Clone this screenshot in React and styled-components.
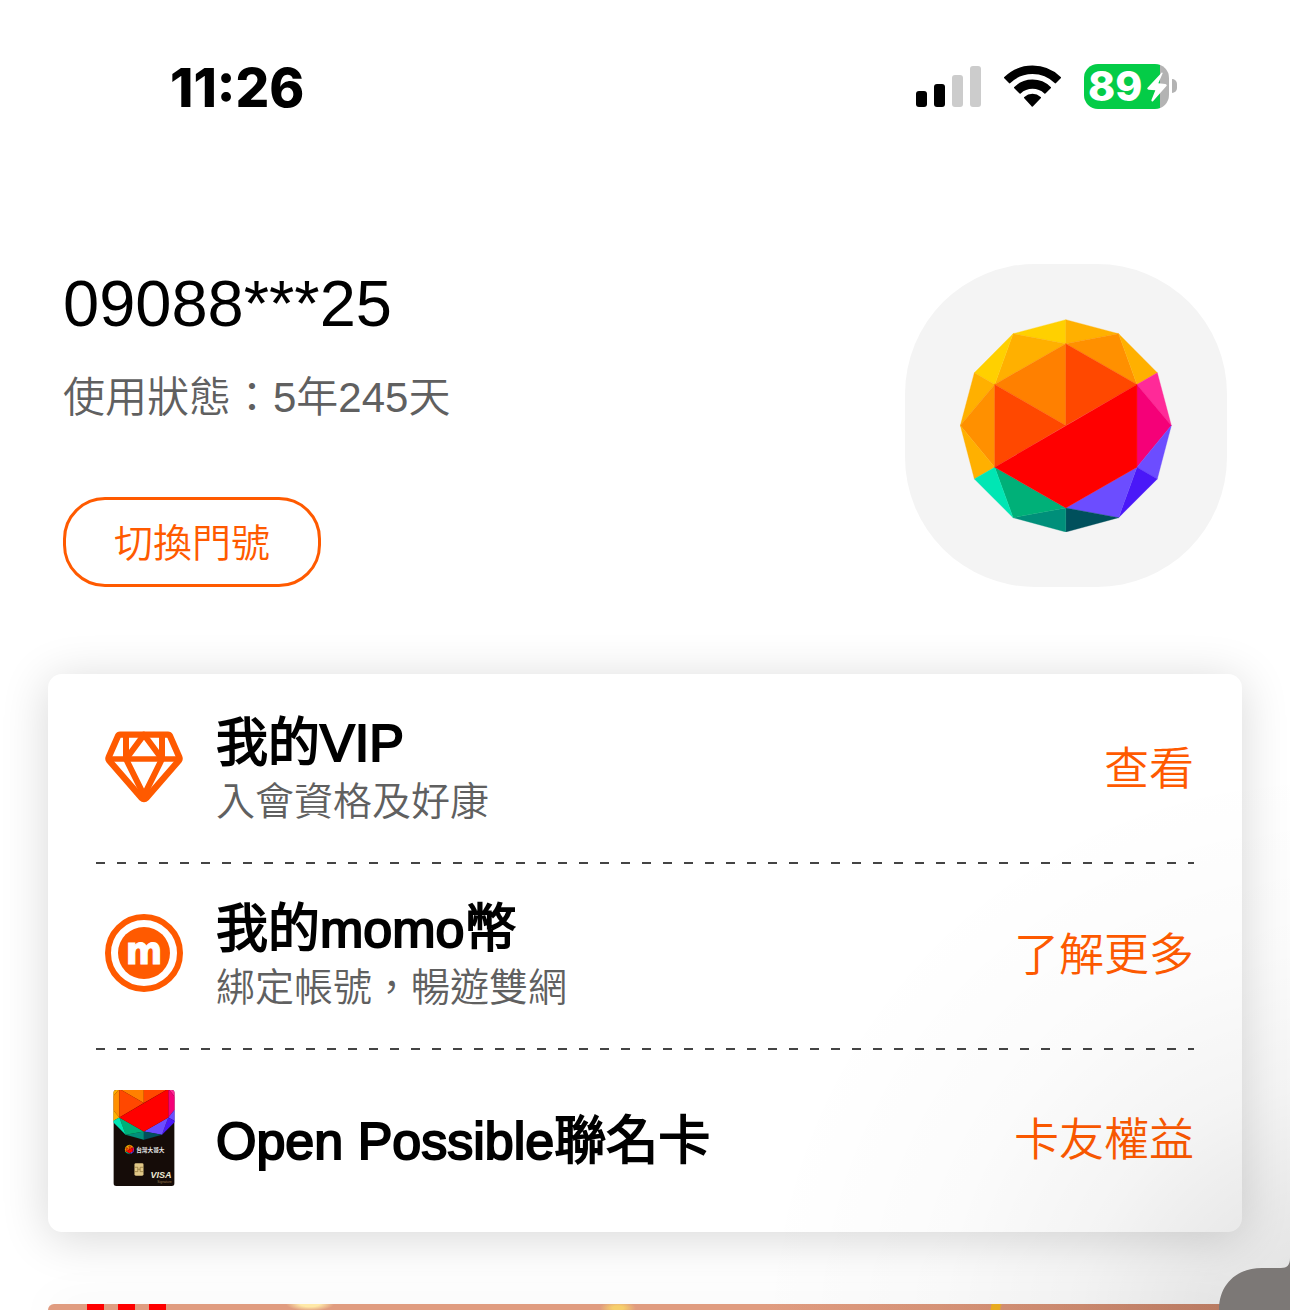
import React from 'react';
import styled, { createGlobalStyle } from 'styled-components';

const GlobalStyle = createGlobalStyle`
  * {
    box-sizing: border-box;
  }

  body {
    margin: 0;
    background: #fff;
    color: #000;
    font-family: 'Liberation Sans', 'Noto Sans CJK TC', sans-serif;
  }
`;

const Screen = styled.div`
  position: relative;
  min-height: 100vh;
  overflow: hidden;

  display: flex;
  flex-direction: column;
`;

const StatusBar = styled.div`
  height: 176px;
  padding: 0 113px 0 170px;

  display: flex;
  align-items: center;
  justify-content: space-between;
`;

const Time = styled.time`
  font-family: Inter, sans-serif;
  font-size: 53px;
  font-weight: 800;
  font-variation-settings: 'opsz' 14;
  line-height: 64px;
`;

const StatusIcons = styled.div`
  padding-bottom: 4px;

  display: flex;
  align-items: center;
  gap: 23px;

  svg {
    display: block;
  }
`;

const Battery = styled.div`
  display: flex;
  align-items: center;
  gap: 3px;
`;

const BatteryBody = styled.div`
  position: relative;
  width: 85px;
  height: 45px;
  padding-left: 4px;
  border-radius: 14px;
  background: linear-gradient(
    to right,
    #04cc47 ${({ $level }) => $level}%,
    #b3b3b3 ${({ $level }) => $level}%
  );

  color: #fff;
  font-family: Inter, sans-serif;
  font-size: 41px;
  font-weight: 800;
  font-variation-settings: 'opsz' 14;
  line-height: 45px;

  svg {
    position: absolute;
    top: 8px;
    right: 2px;
  }
`;

const BatteryTip = styled.div`
  width: 5px;
  height: 14px;
  border-radius: 0 6px 6px 0;
  background: #b3b3b3;
`;

const Profile = styled.header`
  padding: 88px 63px 87px;

  display: flex;
  justify-content: space-between;
`;

const ProfileInfo = styled.div`
  display: flex;
  flex-direction: column;
  align-items: flex-start;
  justify-content: space-between;
`;

const PhoneNumber = styled.h1`
  margin: 0 0 24px;
  font-size: 65px;
  font-weight: 400;
  line-height: 80px;
`;

const UsageStatus = styled.p`
  margin: 0;
  color: #606060;
  font-size: 42px;
  font-weight: 350;
  line-height: 60px;
`;

const SwitchButton = styled.button`
  height: 90px;
  padding: 0 48px 4px;
  border: 3px solid #ff5a00;
  border-radius: 42px;
  background: #fff;

  color: #ff5a00;
  font-family: inherit;
  font-size: 39px;
  font-weight: 350;
  cursor: pointer;
`;

const Avatar = styled.div`
  width: 322px;
  height: 323px;
  flex-shrink: 0;
  border-radius: 130px;
  background: #f4f4f4;

  display: flex;
  align-items: center;
  justify-content: center;
`;

const Card = styled.ul`
  margin: 0 48px 72px;
  padding: 4px 48px 0;
  border-radius: 14px;
  background: #fff;
  box-shadow: 0 6px 48px rgba(0, 0, 0, 0.16);
  list-style: none;
`;

const Row = styled.li`
  min-height: 184px;

  display: flex;
  align-items: center;
  gap: 24px;

  &:last-child {
    min-height: 182px;
  }
`;

const Divider = styled.li`
  height: 2px;
  background: repeating-linear-gradient(
    to right,
    #444 0 9px,
    transparent 9px 21px
  );
`;

const IconBox = styled.div`
  width: 96px;
  padding-bottom: 6px;
  flex-shrink: 0;

  display: flex;
  justify-content: center;
`;

const RowText = styled.div`
  flex: 1;
`;

const Title = styled.h2`
  margin: 0;
  font-size: 52px;
  font-weight: 350;
  line-height: 64px;
  -webkit-text-stroke: 2px #000;
`;

const Description = styled.p`
  margin: 0;
  color: #606060;
  font-size: 39px;
  font-weight: 350;
  line-height: 54px;
`;

const RowLink = styled.a`
  color: #ff5a00;
  font-size: 45px;
  font-weight: 350;
  line-height: 60px;
  text-decoration: none;
`;

const Banner = styled.div`
  flex: 1;
  min-height: 6px;
  margin: 0 48px;
  border-radius: 14px 14px 0 0;
  box-shadow: 0 6px 48px rgba(0, 0, 0, 0.16);
  background:
    linear-gradient(#f00, #f00) 39px 0 / 17px 100% no-repeat,
    linear-gradient(#f00, #f00) 70px 0 / 17px 100% no-repeat,
    linear-gradient(#f00, #f00) 101px 0 / 17px 100% no-repeat,
    linear-gradient(100deg, transparent 3px, #eeb020 4px 12px, transparent 14px)
      940px 0 / 18px 100% no-repeat,
    radial-gradient(24px 7px at 262px 0, #ffe9a8 40%, transparent),
    radial-gradient(18px 7px at 570px 4px, #f6cf6c 30%, transparent),
    linear-gradient(to right, #e09c80 0 60%, #cb866b);
`;

const Shade = styled.div`
  position: absolute;
  inset: 0;
  pointer-events: none;
  background: radial-gradient(
    circle 580px at calc(100% + 40px) calc(100% + 30px),
    rgba(0, 0, 0, 0.13),
    rgba(0, 0, 0, 0.085) 24%,
    rgba(0, 0, 0, 0.045) 44%,
    rgba(0, 0, 0, 0.016) 68%,
    transparent
  );
`;

const FloatingTab = styled.div`
  position: absolute;
  right: 0;
  bottom: 0;

  svg {
    display: block;
  }
`;

const facets = [
  ['528,208 528,280 370,250', '#ffd000'],
  ['528,208 686,250 528,280', '#ffb000'],
  ['370,250 528,280 315,402', '#ffb000'],
  ['370,250 315,402 254,367', '#ffd000'],
  ['254,367 315,402 212,525', '#ffb000'],
  ['315,402 315,650 212,525', '#ff9000'],
  ['212,525 315,650 254,685', '#ffb000'],
  ['686,250 741,402 528,280', '#ff9000'],
  ['686,250 802,367 741,402', '#ffb000'],
  ['802,367 844,525 741,402', '#ff2a98'],
  ['741,402 844,525 741,650', '#f50078'],
  ['844,525 802,685 741,650', '#6c4dff'],
  ['741,650 802,685 686,801', '#4a18f8'],
  ['741,650 686,801 528,772', '#6c4dff'],
  ['528,772 686,801 528,844', '#00505c'],
  ['528,772 528,844 370,801', '#008f7a'],
  ['315,650 528,772 370,801', '#00b078'],
  ['315,650 370,801 254,685', '#00e6b4'],
  ['528,280 528,525 315,402', '#ff8000'],
  ['528,280 741,402 528,525', '#ff4800'],
  ['315,402 528,525 315,650', '#ff4800'],
  ['741,402 741,650 528,772 315,650', '#ff0000'],
];

const GemFacets = () =>
  facets.map(([points, color]) => (
    <polygon
      key={points}
      points={points}
      fill={color}
      stroke={color}
      strokeLinejoin="round"
    />
  ));

const GemLogo = () => (
  <svg width="212" height="213" viewBox="211 206 635 638" aria-hidden="true">
    <GemFacets />
  </svg>
);

const SignalIcon = () => (
  <svg width="65" height="41" viewBox="0 0 65 41" aria-hidden="true">
    <rect x="0" y="25" width="11" height="16" rx="3" />
    <rect x="18" y="18" width="11" height="23" rx="3" />
    <rect x="36" y="9" width="11" height="32" rx="3" fill="#ccc" />
    <rect x="54" y="0" width="11" height="41" rx="3" fill="#ccc" />
  </svg>
);

const WifiIcon = () => (
  <svg width="57" height="42" viewBox="342 75 171 126" aria-hidden="true">
    <g stroke="#000" strokeWidth="6" strokeLinejoin="round">
      <path d="M345 113 A119 119 0 0 1 510 113 L496 127 A98 98 0 0 0 359 127 Z" />
      <path d="M375 143 A75 75 0 0 1 480 143 L465 158 A55 55 0 0 0 390 158 Z" />
      <path d="M405 173 A34 34 0 0 1 450 173 L427 197 Z" />
    </g>
  </svg>
);

const BoltIcon = () => (
  <svg width="20" height="30" viewBox="770 95 60 90" aria-hidden="true">
    <path
      d="M815 96 L771 143 Q770 148 775 148 L795 150 L783 180 Q784 185 788 183 L829 136 Q830 132 825 131 L804 129 L817 99 Z"
      fill="#fff"
    />
  </svg>
);

const DiamondIcon = () => (
  <svg width="78" height="72" viewBox="195 211 234 216" aria-hidden="true">
    <g fill="none" stroke="#ff5a00" strokeWidth="18" strokeLinejoin="round">
      <path
        d="M240 222 H384 Q388 222 390 226 L418 290 Q420 295 417 299 L320 411 Q312 419 304 411 L207 299 Q204 295 206 290 L234 226 Q236 222 240 222 Z"
        strokeWidth="19"
      />
      <path d="M205 295 H419" strokeWidth="16" />
      <path d="M258 222 V295 L312 222 L366 295 V222" />
      <path d="M258 295 L312 404 L366 295" />
    </g>
  </svg>
);

const MomoIcon = () => (
  <svg width="78" height="78" viewBox="0 0 78 78" aria-hidden="true">
    <circle cx="39" cy="39" r="36" fill="none" stroke="#ff5a00" strokeWidth="6" />
    <circle cx="39" cy="39" r="26" fill="#ff5a00" />
    <text
      x="39"
      y="50"
      fill="#fff"
      stroke="#fff"
      fontFamily="'DejaVu Sans Condensed', 'DejaVu Sans', sans-serif"
      fontSize="39"
      fontWeight="700"
      textAnchor="middle"
    >
      m
    </text>
  </svg>
);

const CreditCard = () => (
  <svg width="62" height="96" viewBox="69 63 183 287" aria-hidden="true">
    <clipPath id="card-edge">
      <rect x="69" y="63" width="183" height="287" rx="9" />
    </clipPath>
    <g clipPath="url(#card-edge)">
      <rect x="69" y="63" width="183" height="287" fill="#150c08" />
      <g transform="translate(160 102) scale(0.343) translate(-528 -525)">
        <GemFacets />
      </g>
      <g transform="translate(117 241) scale(0.044) translate(-528 -525)">
        <GemFacets />
      </g>
      <rect x="132" y="282" width="27" height="37" rx="4" fill="#e0c887" />
      <path
        d="M132 294 H142 V307 H132 M159 294 H149 V307 H159 M142 300 H149"
        fill="none"
        stroke="#8a7136"
        strokeWidth="2"
      />
      <text
        x="137"
        y="247"
        fill="#e8e8e8"
        fontFamily="'Noto Sans CJK TC', sans-serif"
        fontSize="17"
        fontWeight="700"
      >
        台灣大哥大
      </text>
      <text
        x="243"
        y="327"
        fill="#efe9d4"
        fontFamily="'Liberation Sans', sans-serif"
        fontSize="27"
        fontStyle="italic"
        fontWeight="700"
        textAnchor="end"
      >
        VISA
      </text>
      <text
        x="243"
        y="340"
        fill="#9c7b4c"
        fontFamily="'Liberation Sans', sans-serif"
        fontSize="10"
        textAnchor="end"
      >
        Signature
      </text>
    </g>
  </svg>
);

const services = [
  {
    icon: <DiamondIcon />,
    title: '我的VIP',
    description: '入會資格及好康',
    link: '查看',
  },
  {
    icon: <MomoIcon />,
    title: '我的momo幣',
    description: '綁定帳號，暢遊雙網',
    link: '了解更多',
  },
  {
    icon: <CreditCard />,
    title: 'Open Possible聯名卡',
    link: '卡友權益',
  },
];

const App = () => {
  return (
    <Screen lang="zh-Hant">
      <GlobalStyle />
      <StatusBar>
        <Time>11:26</Time>
        <StatusIcons>
          <SignalIcon />
          <WifiIcon />
          <Battery>
            <BatteryBody $level={89}>
              89
              <BoltIcon />
            </BatteryBody>
            <BatteryTip />
          </Battery>
        </StatusIcons>
      </StatusBar>

      <Profile>
        <ProfileInfo>
          <div>
            <PhoneNumber>09088***25</PhoneNumber>
            <UsageStatus>使用狀態：5年245天</UsageStatus>
          </div>
          <SwitchButton type="button">切換門號</SwitchButton>
        </ProfileInfo>
        <Avatar>
          <GemLogo />
        </Avatar>
      </Profile>

      <Card>
        {services.map(({ icon, title, description, link }, index) => (
          <React.Fragment key={title}>
            {index > 0 && <Divider role="separator" />}
            <Row>
              <IconBox>{icon}</IconBox>
              <RowText>
                <Title>{title}</Title>
                {description && <Description>{description}</Description>}
              </RowText>
              <RowLink href="#">{link}</RowLink>
            </Row>
          </React.Fragment>
        ))}
      </Card>

      <Banner />
      <Shade />
      <FloatingTab>
        <svg width="71" height="52" viewBox="0 0 71 52" aria-hidden="true">
          <path
            d="M0 52 C0 26 18 10 43 10 H62 C68 10 71 7 71 0 V52 Z"
            fill="#7c7876"
          />
        </svg>
      </FloatingTab>
    </Screen>
  );
};

export default App;
